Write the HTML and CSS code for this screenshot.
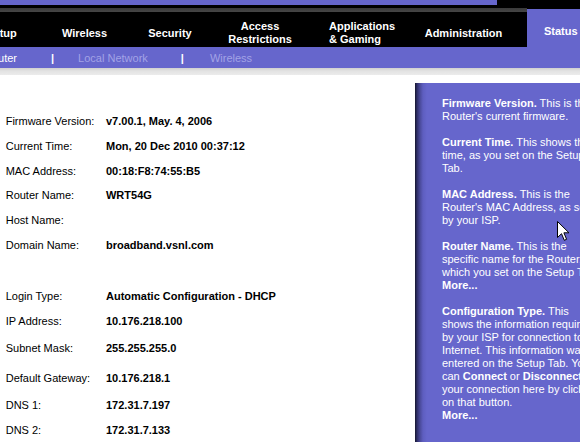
FILE: index.html
```html
<!DOCTYPE html>
<html>
<head>
<meta charset="utf-8">
<link rel="stylesheet" href="styles.css">
</head>
<body>
<div class="page">
  <header class="header">
    <div class="brandbar"><div class="brandfill"></div></div>
    <div class="tabrow">
      <div class="tabs">
        <div class="tab t-setup">Setup</div>
        <div class="tab t-wireless">Wireless</div>
        <div class="tab t-security">Security</div>
        <div class="tab t-access">Access<br>Restrictions</div>
        <div class="tab t-apps">Applications<br>&amp; Gaming</div>
        <div class="tab t-admin">Administration</div>
      </div>
      <div class="status">Status</div>
    </div>
  </header>
  <nav class="subnav">
    <span class="sub current">Router</span>
    <span class="sep sep1">|</span>
    <span class="sub">Local Network</span>
    <span class="sep sep2">|</span>
    <span class="sub">Wireless</span>
  </nav>
  <div class="rule"></div>
  <div class="main">
    <section class="content">
      <div class="row"><span class="label">Firmware Version:</span><span class="value">v7.00.1, May. 4, 2006</span></div>
      <div class="row"><span class="label">Current Time:</span><span class="value">Mon, 20 Dec 2010 00:37:12</span></div>
      <div class="row"><span class="label">MAC Address:</span><span class="value">00:18:F8:74:55:B5</span></div>
      <div class="row"><span class="label">Router Name:</span><span class="value">WRT54G</span></div>
      <div class="row"><span class="label">Host Name:</span><span class="value"></span></div>
      <div class="row"><span class="label">Domain Name:</span><span class="value">broadband.vsnl.com</span></div>
      <div class="row gap-lg"><span class="label">Login Type:</span><span class="value">Automatic Configuration - DHCP</span></div>
      <div class="row"><span class="label">IP Address:</span><span class="value">10.176.218.100</span></div>
      <div class="row gap-sm"><span class="label">Subnet Mask:</span><span class="value">255.255.255.0</span></div>
      <div class="row gap-md"><span class="label">Default Gateway:</span><span class="value">10.176.218.1</span></div>
      <div class="row gap-xs"><span class="label">DNS 1:</span><span class="value">172.31.7.197</span></div>
      <div class="row"><span class="label">DNS 2:</span><span class="value">172.31.7.133</span></div>
    </section>
    <aside class="panel">
      <div class="help">
        <p><b>Firmware Version.</b> This is the Router's current firmware.</p>
        <p><b>Current Time.</b> This shows the time, as you set on the Setup Tab.</p>
        <p><b>MAC Address.</b> This is the Router's MAC Address, as set by your ISP.</p>
        <p><b>Router Name.</b> This is the specific name for the Router, which you set on the Setup Tab.<br><b>More...</b></p>
        <p><b>Configuration Type.</b> This shows the information required by your ISP for connection to the Internet. This information was entered on the Setup Tab. You can <b>Connect</b> or <b>Disconnect</b> your connection here by clicking on that button.<br><b>More...</b></p>
      </div>
      <svg class="cursor" width="13" height="21" viewBox="0 0 13 21">
        <path d="M0.5 0.5 L0.5 16.5 L4.5 12.7 L7.3 19.3 L9.6 18.3 L6.9 11.8 L12 11.8 Z" fill="#fff" stroke="#000" stroke-width="1" stroke-linejoin="miter"/>
      </svg>
    </aside>
  </div>
</div>
</body>
</html>
```

FILE: styles.css
```css
html, body {
  margin: 0;
  padding: 0;
  background: #fff;
}
body {
  font-family: "Liberation Sans", Arial, sans-serif;
  font-size: 11px;
  overflow: hidden;
}
.page {
  width: 580px;
  height: 442px;
  overflow: hidden;
  position: relative;
}

/* header */
.header {
  background: #000;
  height: 47px;
  display: flex;
  flex-direction: column;
}
.brandbar {
  height: 5px;
  margin-bottom: 3px;
}
.brandfill {
  width: 497px;
  height: 5px;
  background: #6666cc;
}
.tabrow {
  display: flex;
  height: 39px;
}
.tabs {
  width: 527px;
  display: flex;
  border-top: 4px solid transparent;
  border-image: linear-gradient(#3a3a3a, #d8d8d8 35%, #c4c4c4 65%, #2a2a2a) 1;
  box-sizing: border-box;
  overflow: visible;
}
.tab {
  color: #fff;
  font-weight: bold;
  line-height: 13px;
  display: flex;
  align-items: center;
  justify-content: center;
  text-align: center;
  padding-top: 7px;
  box-sizing: border-box;
  flex: none;
  white-space: nowrap;
}
.t-setup { width: 83px; margin-left: -40px; }
.t-wireless { width: 83px; }
.t-security { width: 88px; }
.t-access { width: 92px; }
.t-apps { width: 112px; justify-content: flex-start; text-align: left; padding-left: 23px; }
.t-admin { width: 91px; }
.status {
  flex: 1;
  margin-top: 1px;
  background: #6666cc;
  color: #fff;
  font-weight: bold;
  display: flex;
  align-items: center;
  padding-left: 17px;
  padding-top: 6px;
  box-sizing: border-box;
}

/* sub navigation */
.subnav {
  background: #6666cc;
  height: 21px;
  display: flex;
  align-items: center;
  padding-top: 1px;
  box-sizing: border-box;
  margin-left: -16px;
  white-space: nowrap;
}
.sub {
  color: #a3a3e6;
}
.sub.current {
  color: #fff;
}
.sep {
  color: #fff;
  font-weight: bold;
}
.sep1 { padding-left: 34px; padding-right: 24px; }
.sep2 { padding-left: 33px; padding-right: 26px; }

.rule {
  height: 7px;
  background: linear-gradient(#cfcfcf, #e2e2e2 40%, #ececec);
}

/* main */
.main {
  display: flex;
  padding-top: 8px;
  height: 380px;
}
.content {
  width: 415px;
  flex: none;
  padding: 25.6px 0 0 5.7px;
  box-sizing: border-box;
}
.row {
  display: flex;
  align-items: center;
  height: 24.8px;
  color: #000;
}
.gap-lg { margin-top: 26px; }
.gap-sm { margin-top: 3px; }
.gap-md { margin-top: 5px; }
.gap-xs { margin-top: 2px; }
.label {
  width: 100.3px;
  flex: none;
}
.value {
  font-weight: bold;
  white-space: nowrap;
}

.panel {
  flex: 1;
  position: relative;
  background: linear-gradient(to right, #15152e 0, #2e2e66 2px, #4a4a9a 5px, #5e5ec0 8px, #6666cc 12px);
  padding: 13.5px 0 0 27px;
  overflow: hidden;
}
.help {
  width: 160px;
  color: #fff;
  line-height: 13px;
}
.help p {
  margin: 0 0 13px 0;
}
.cursor {
  position: absolute;
  left: 142px;
  top: 138px;
}
```
